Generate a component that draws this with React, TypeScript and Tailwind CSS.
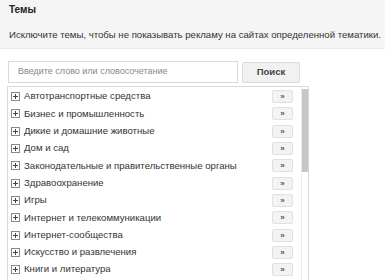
import React from "react";

const topics = [
  "Автотранспортные средства",
  "Бизнес и промышленность",
  "Дикие и домашние животные",
  "Дом и сад",
  "Законодательные и правительственные органы",
  "Здравоохранение",
  "Игры",
  "Интернет и телекоммуникации",
  "Интернет-сообщества",
  "Искусство и развлечения",
  "Книги и литература",
];

const PlusBox = () => (
  <svg width="9" height="9" viewBox="0 0 9 9" className="shrink-0">
    <rect x="0.5" y="0.5" width="8" height="8" fill="#fff" stroke="#8a8a8a" />
    <path d="M2 4.5h5M4.5 2v5" stroke="#444" strokeWidth="1" />
  </svg>
);

export default function App() {
  return (
    <div className="w-[385px] h-[280px] overflow-hidden bg-white font-['Liberation_Sans',Arial,sans-serif]">
      <div className="bg-[#f5f5f5] h-[49px] px-[9px] pt-[3px] border-b border-[#ebebeb]">
        <div className="text-[10px] font-bold text-[#222] leading-[14px]">Темы</div>
        <div className="mt-[11px] text-[9.6px] text-[#333] leading-[14px] whitespace-nowrap">
          Исключите темы, чтобы не показывать рекламу на сайтах определенной тематики.
        </div>
      </div>
      <div className="flex items-center gap-[4px] mt-[12px] pl-[8px]">
        <div className="w-[230px] h-[22px] border border-[#d9d9d9] flex items-center px-[9px] text-[9px] text-[#888]">
          Введите слово или словосочетание
        </div>
        <button className="w-[58px] h-[21px] rounded-[2px] border border-[#dcdcdc] bg-[#f1f1f1] text-[9.5px] font-bold text-[#444]">
          Поиск
        </button>
      </div>
      <div className="ml-[7px] mt-[3px] w-[302px] h-[200px] border-t border-l border-r border-[#d9d9d9] flex">
        <div className="flex-1 pt-[1px]">
          {topics.map((t) => (
            <div key={t} className="h-[17.3px] flex items-center pl-[3px] pr-[8px]">
              <PlusBox />
              <span className="ml-[4px] text-[9.6px] text-[#333] whitespace-nowrap flex-1">{t}</span>
              <button className="w-[21px] h-[13px] rounded-[2px] border border-[#e0e0e0] bg-[#f3f3f3] text-[8px] leading-[11px] font-bold text-[#555]">
                »
              </button>
            </div>
          ))}
        </div>
        <div className="w-[7px] bg-white border-l border-[#ececec]">
          <div className="mt-[2px] w-[6px] h-[83px] bg-[#c6c6c6]" />
        </div>
      </div>
    </div>
  );
}
